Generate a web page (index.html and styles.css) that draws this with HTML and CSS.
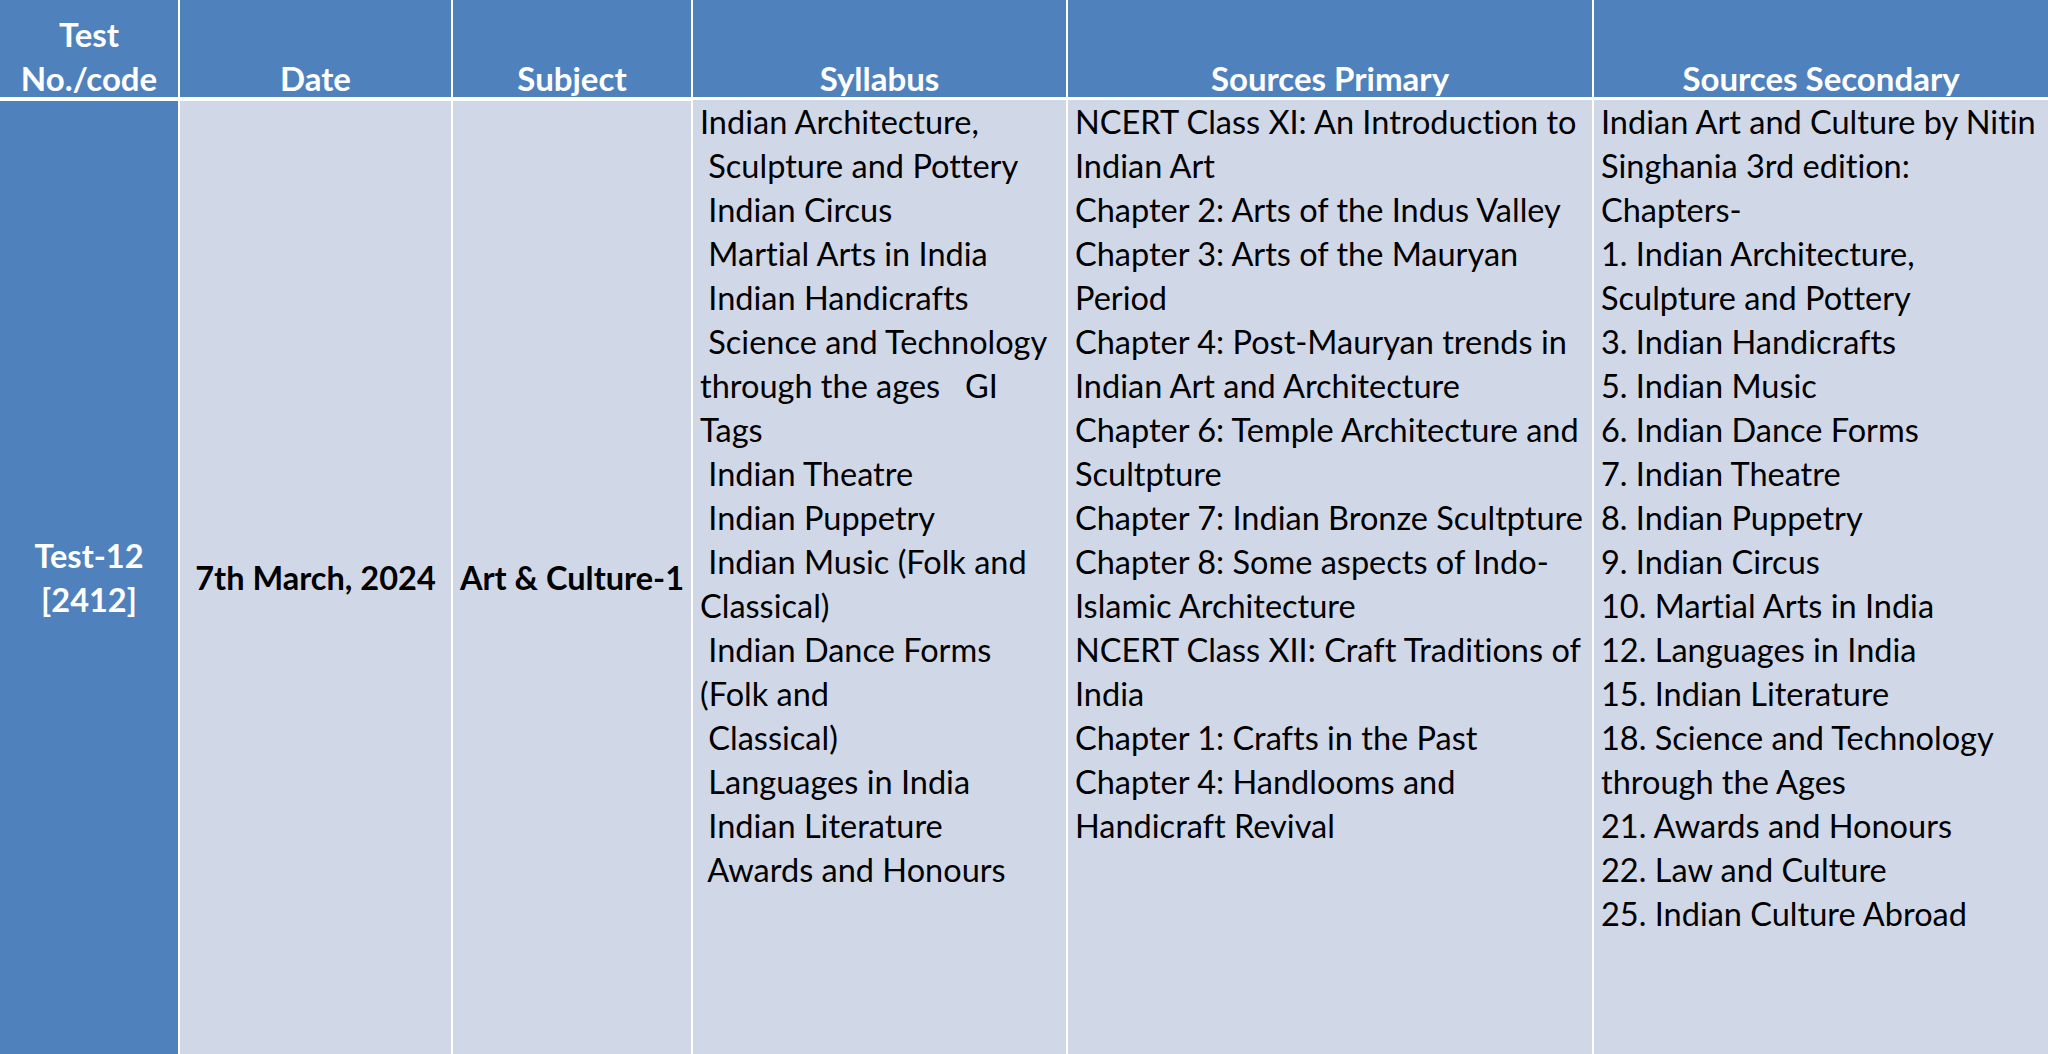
FILE: index.html
```html
<!DOCTYPE html>
<html>
<head>
<meta charset="utf-8">
<link rel="stylesheet" href="styles.css">
</head>
<body>
<div class="sheet">
  <div class="hd"><div class="ht">Test<br>No./code</div></div>
  <div class="hd"><div class="ht">Date</div></div>
  <div class="hd"><div class="ht">Subject</div></div>
  <div class="hd"><div class="ht">Syllabus</div></div>
  <div class="hd"><div class="ht">Sources Primary</div></div>
  <div class="hd"><div class="ht">Sources Secondary</div></div>

  <div class="cell code">Test-12<br>[2412]</div>
  <div class="cell mid">7th March, 2024</div>
  <div class="cell mid">Art &amp; Culture-1</div>
  <div class="cell list">Indian Architecture,
 Sculpture and Pottery
 Indian Circus
 Martial Arts in India
 Indian Handicrafts
 Science and Technology
through the ages   GI
Tags
 Indian Theatre
 Indian Puppetry
 Indian Music (Folk and
Classical)
 Indian Dance Forms
(Folk and
 Classical)
 Languages in India
 Indian Literature
 Awards and Honours</div>
  <div class="cell list">NCERT Class XI: An Introduction to
Indian Art
Chapter 2: Arts of the Indus Valley
Chapter 3: Arts of the Mauryan
Period
Chapter 4: Post-Mauryan trends in
Indian Art and Architecture
Chapter 6: Temple Architecture and
Scultpture
Chapter 7: Indian Bronze Scultpture
Chapter 8: Some aspects of Indo-
Islamic Architecture
NCERT Class XII: Craft Traditions of
India
Chapter 1: Crafts in the Past
Chapter 4: Handlooms and
Handicraft Revival</div>
  <div class="cell list">Indian Art and Culture by Nitin
Singhania 3rd edition:
Chapters-
1. Indian Architecture,
Sculpture and Pottery
3. Indian Handicrafts
5. Indian Music
6. Indian Dance Forms
7. Indian Theatre
8. Indian Puppetry
9. Indian Circus
10. Martial Arts in India
12. Languages in India
15. Indian Literature
18. Science and Technology
through the Ages
21. Awards and Honours
22. Law and Culture
25. Indian Culture Abroad</div>
</div>
</body>
</html>
```
FILE: styles.css
```css
html, body {
  margin: 0;
  padding: 0;
  background: #ffffff;
}
body {
  width: 2048px;
  height: 1054px;
  overflow: hidden;
  font-family: Lato, "Open Sans", sans-serif;
  font-variant-ligatures: none;
  font-feature-settings: "liga" 0, "dlig" 0;
}
.sheet {
  display: grid;
  grid-template-columns: 178px 271px 238px 373px 524px 454px;
  grid-template-rows: 97px 953px;
  column-gap: 2px;
  row-gap: 4px;
}
.hd {
  background: #4f81bd;
  color: #ffffff;
  font-weight: 700;
  font-size: 33px;
  line-height: 44px;
  display: flex;
  flex-direction: column;
  justify-content: flex-end;
  align-items: center;
  text-align: center;
}
.ht {
  margin-bottom: -3px;
}
.cell {
  background: #d0d8e8;
  color: #000000;
  font-size: 32.5px;
  line-height: 44px;
}
.code {
  background: #4f81bd;
  color: #ffffff;
  font-weight: 700;
  display: flex;
  align-items: center;
  justify-content: center;
  text-align: center;
}
.mid {
  font-weight: 700;
  display: flex;
  align-items: center;
  justify-content: center;
  text-align: center;
}
.list {
  white-space: pre;
  padding: 0 0 0 7px;
  margin-top: -1px;
}
```
